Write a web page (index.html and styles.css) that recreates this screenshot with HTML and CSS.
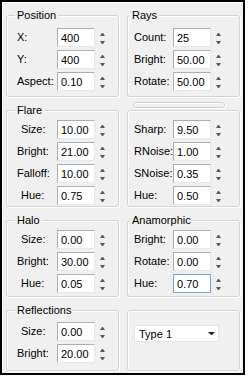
FILE: index.html
```html
<!DOCTYPE html>
<html lang="en">
<head>
    <meta charset="UTF-8">
    <meta name="viewport" content="width=device-width, initial-scale=1.0">
    <title>Lens Flare</title>
    <link rel="stylesheet" href="styles.css">
</head>
<body>
    <div class="frame">
        <!-- Row 1 -->
        <fieldset class="group l roomy">
            <legend>Position</legend>
            <div class="rows">
                <div class="row"><label>X:</label><input type="text" value="400"><span class="spin"></span></div>
                <div class="row"><label>Y:</label><input type="text" value="400"><span class="spin"></span></div>
                <div class="row"><label>Aspect:</label><input type="text" value="0.10"><span class="spin"></span></div>
            </div>
        </fieldset>
        <fieldset class="group r roomy">
            <legend>Rays</legend>
            <div class="rows">
                <div class="row"><label>Count:</label><input type="text" value="25"><span class="spin"></span></div>
                <div class="row"><label>Bright:</label><input type="text" value="50.00"><span class="spin"></span></div>
                <div class="row"><label>Rotate:</label><input type="text" value="50.00"><span class="spin"></span></div>
            </div>
        </fieldset>

        <!-- Row 2 -->
        <fieldset class="group l">
            <legend>Flare</legend>
            <div class="rows">
                <div class="row"><label class="indent">Size:</label><input type="text" value="10.00"><span class="spin"></span></div>
                <div class="row"><label>Bright:</label><input type="text" value="21.00"><span class="spin"></span></div>
                <div class="row"><label>Falloff:</label><input type="text" value="10.00"><span class="spin"></span></div>
                <div class="row"><label class="indent">Hue:</label><input type="text" value="0.75"><span class="spin"></span></div>
            </div>
        </fieldset>
        <div class="stack">
            <div class="sep"></div>
            <fieldset class="group r plain">
                <div class="rows">
                    <div class="row"><label>Sharp:</label><input type="text" value="9.50"><span class="spin"></span></div>
                    <div class="row"><label>RNoise:</label><input type="text" value="1.00"><span class="spin"></span></div>
                    <div class="row"><label>SNoise:</label><input type="text" value="0.35"><span class="spin"></span></div>
                    <div class="row"><label>Hue:</label><input type="text" value="0.50"><span class="spin"></span></div>
                </div>
            </fieldset>
        </div>

        <!-- Row 3 -->
        <fieldset class="group l">
            <legend>Halo</legend>
            <div class="rows">
                <div class="row"><label class="indent">Size:</label><input type="text" value="0.00"><span class="spin"></span></div>
                <div class="row"><label>Bright:</label><input type="text" value="30.00"><span class="spin"></span></div>
                <div class="row"><label class="indent">Hue:</label><input type="text" value="0.05"><span class="spin"></span></div>
            </div>
        </fieldset>
        <fieldset class="group r">
            <legend>Anamorphic</legend>
            <div class="rows">
                <div class="row"><label>Bright:</label><input type="text" value="0.00"><span class="spin"></span></div>
                <div class="row"><label>Rotate:</label><input type="text" value="0.00"><span class="spin"></span></div>
                <div class="row"><label>Hue:</label><input type="text" class="focus" value="0.70"><span class="spin"></span></div>
            </div>
        </fieldset>

        <!-- Row 4 -->
        <fieldset class="group l low">
            <legend>Reflections</legend>
            <div class="rows">
                <div class="row"><label class="indent">Size:</label><input type="text" value="0.00"><span class="spin"></span></div>
                <div class="row"><label>Bright:</label><input type="text" value="20.00"><span class="spin"></span></div>
            </div>
        </fieldset>
        <fieldset class="group r plain type">
            <div class="combo"><span>Type 1</span><span class="caret"></span></div>
        </fieldset>
    </div>
</body>
</html>
```

FILE: styles.css
```css
body {
    margin: 0;
    background: #fff;
    font-family: "Liberation Sans", Arial, sans-serif;
    font-size: 11px;
    color: #000;
}

.frame {
    box-sizing: border-box;
    width: 245px;
    height: 375px;
    border: 2px solid #000;
    background: #f0f0f0;
    box-shadow: inset 1px 1px 0 #fff;
    padding: 7px 3px 2px 4px;
    display: grid;
    grid-template-columns: 113px 113px;
    grid-template-rows: 88px 103px 83px 67px;
    column-gap: 8px;
    row-gap: 7px;
}

/* Group boxes */
.group {
    box-sizing: border-box;
    margin: 0;
    min-width: 0;
    border: 1px solid #d3d3d3;
    border-radius: 3px;
    box-shadow: inset 1px 1px 0 #fff, 1px 1px 0 #fff;
    padding: 3px 0 0 10px;
}

.group legend {
    line-height: 13px;
    padding: 0 2px;
    margin-left: -2px;
    background: #f0f0f0;
}

.group.r {
    padding-left: 6px;
}

.group.r legend {
    margin-left: -4px;
}

.group.roomy {
    padding-top: 6px;
}

.group.low {
    padding-top: 5px;
}

.group.plain {
    padding-top: 9px;
}

.group.type {
    margin-top: 6px;
    padding-top: 14px;
}

.stack {
    display: flex;
    flex-direction: column;
}

.stack .group {
    flex: 1;
    margin-top: 2px;
}

.sep {
    box-sizing: border-box;
    height: 6px;
    margin: -2px 15px 0 6px;
    border: 1px solid #d3d3d3;
    border-radius: 3px;
    box-shadow: inset 1px 1px 0 #fff, 1px 1px 0 #fff;
}

/* Spin rows */
.rows {
    display: flex;
    flex-direction: column;
    gap: 3px;
}

.row {
    display: flex;
    align-items: flex-start;
    height: 19px;
}

.row label {
    box-sizing: border-box;
    width: 40px;
    line-height: 19px;
    white-space: nowrap;
}

.group.r .row label {
    width: 39px;
}

.row label.indent {
    padding-left: 4px;
}

.row input {
    box-sizing: border-box;
    width: 38px;
    height: 19px;
    margin: 0;
    padding: 0 3px;
    border: 1px solid;
    border-color: #abadb3 #e3e9ef #e3e9ef #abadb3;
    background: #fff;
    font: inherit;
    color: #000;
    outline: none;
}

.row input.focus {
    border-color: #7da2ce;
}

.spin {
    display: flex;
    flex-direction: column;
    align-items: center;
    gap: 5px;
    width: 5px;
    margin-left: 5px;
    padding-top: 5px;
}

.spin::before,
.spin::after {
    content: "";
    width: 1px;
    height: 0;
    border-left: 2px solid transparent;
    border-right: 2px solid transparent;
}

.spin::before {
    border-bottom: 3px solid #5a5a5a;
}

.spin::after {
    border-top: 3px solid #5a5a5a;
}

/* Dropdown */
.combo {
    box-sizing: border-box;
    display: flex;
    align-items: center;
    justify-content: space-between;
    width: 85px;
    height: 17px;
    padding: 0 3px 0 4px;
    border: 1px solid #e6e6e6;
    background: #fff;
}

.caret {
    width: 1px;
    height: 0;
    border-left: 3px solid transparent;
    border-right: 3px solid transparent;
    border-top: 3px solid #222;
}
```
